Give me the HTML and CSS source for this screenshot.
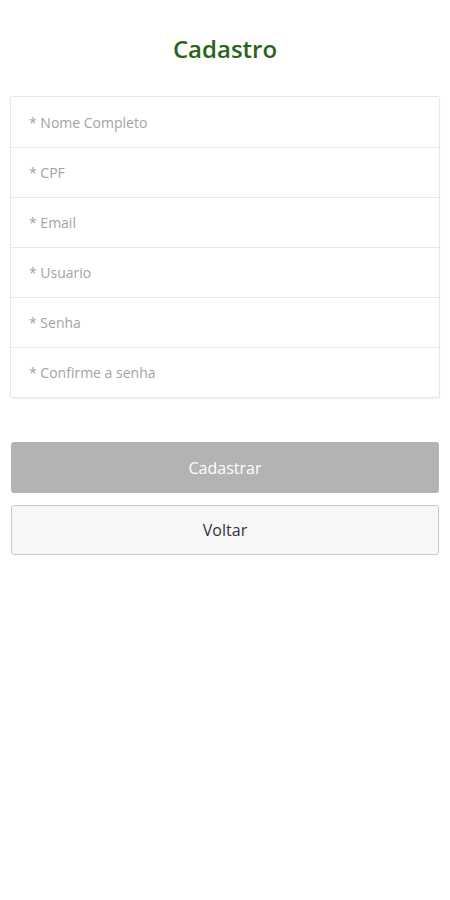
FILE: index.html
```html
<!DOCTYPE html>
<html lang="pt">
<head>
    <meta charset="UTF-8">
    <title>Cadastro</title>
    <link rel="stylesheet" href="styles.css">
</head>
<body>
    <div class="page">
        <h1 class="title">Cadastro</h1>
        <form class="form-list">
            <input type="text" class="field" placeholder="* Nome Completo">
            <input type="text" class="field" placeholder="* CPF">
            <input type="email" class="field" placeholder="* Email">
            <input type="text" class="field" placeholder="* Usuario">
            <input type="password" class="field" placeholder="* Senha">
            <input type="password" class="field" placeholder="* Confirme a senha">
        </form>
        <div class="button-group">
            <button type="button" class="btn btn-primary" disabled>Cadastrar</button>
            <button type="button" class="btn btn-back">Voltar</button>
        </div>
    </div>
</body>
</html>
```

FILE: styles.css
```css
body {
    margin: 0;
    background-color: #fff;
    font-family: 'Open Sans', 'Noto Sans', sans-serif;
}
.page {
    padding: 0 10px;
}
.title {
    margin: 0;
    padding: 33px 0 31px;
    text-align: center;
    font-size: 24px;
    font-weight: 600;
    line-height: 32px;
    color: #2a6418;
}
.form-list {
    display: flex;
    flex-direction: column;
    border: 1px solid #e6e6e6;
    border-radius: 2px;
    box-shadow: 0 1px 2px rgba(0,0,0,0.05);
}
.field {
    height: 49px;
    margin: 0;
    padding: 0 18px;
    border: none;
    border-top: 1px solid #e6e6e6;
    font-family: inherit;
    font-size: 14px;
    color: #333;
    background: #fff;
    outline: none;
}
.field:first-child {
    height: 50px;
    border-top: none;
}
.field::placeholder {
    color: #a3a3a3;
}
.button-group {
    display: flex;
    flex-direction: column;
    gap: 12px;
    margin-top: 44px;
    padding: 0 1px;
}
.btn {
    height: 51px;
    border-radius: 3px;
    font-family: inherit;
    font-size: 16px;
    cursor: pointer;
}
.btn-primary {
    background-color: #b3b3b3;
    color: #fff;
    border: none;
}
.btn-back {
    height: 50px;
    background-color: #f7f7f7;
    color: #333;
    border: 1px solid #c8c8c8;
}
```
